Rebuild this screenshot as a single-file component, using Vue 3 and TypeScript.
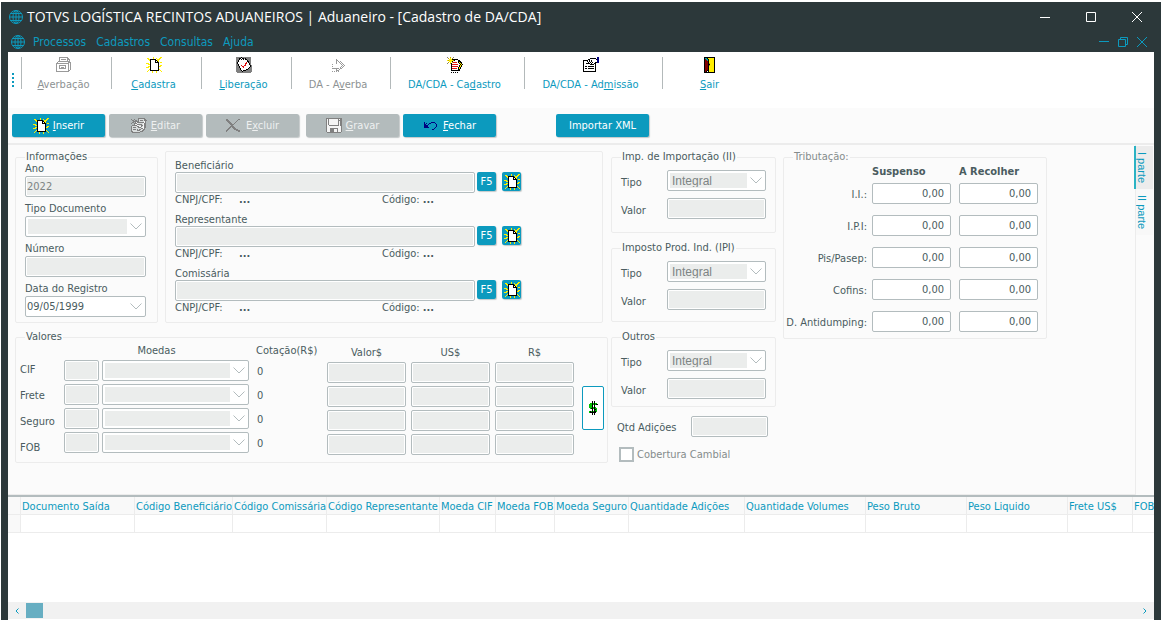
<script setup lang="ts">
import { ref } from 'vue'

interface Run { color: string; d: string }

const palette: Record<string, string> = {
  k: '#000000', w: '#ffffff', y: '#ffee00', g: '#9a9a9a', l: '#d8dcdc',
  d: '#808080', r: '#e01010', m: '#800000', b: '#000080', t: '#00a0a0',
  o: '#c0a000', e: '#00b000', s: '#f4f4f4',
}

const sprites: Record<string, string[]> = {
  newDoc: [
    '.......y......yy',
    '.yy....y..y..yy.',
    '..yykkkkkk.yyy..',
    '...ykwwwwkkyy...',
    '....kwwwwkwky...',
    '....kwwwwkkkk.yy',
    'yyy.kwwwwwwwk...',
    '..yykwwwwwwwk...',
    '....kwwwwwwwk.yy',
    '..yykwwwwwwwkyy.',
    'yyy.kwwwwwwwk...',
    '....kwwwwwwwk...',
    '...ykwwwwwwwky..',
    '..y.kkkkkkkkk.y.',
    '.y....y...y....y',
    '......y...y.....',
  ],
  drawer: [
    '...ggggggggg....',
    '...g.......gg...',
    '...g.ggggg.ggg..',
    '...g.......g.g..',
    '..gggggggggggg..',
    '.g..........ggg.',
    'ggggggggggggg.g.',
    'g...........g.g.',
    'g..ggggggg..g.g.',
    'g..g.....g..g.g.',
    'g..g.ggg.g..g.g.',
    'g..ggggggg..g.g.',
    'g...........g.g.',
    'g...........gg..',
    'ggggggggggggg...',
    '................',
  ],
  check: [
    'dddddkddddddddd.',
    'dddkkwkkdkddddd.',
    'dddkwkwkwkkdddd.',
    'ddkwwwwwwwwkddd.',
    'ddkwwwwwwwwkkdd.',
    'dkwwwwwwwwrwkdd.',
    'dkwwwwwwwrrwwkd.',
    'ddkwwwwwwrwwwkd.',
    'ddkwwrwwrrwwwwkd',
    'dddkwwrrwwwwwwkd',
    'dddkwwwrwwwwwkdd',
    'ddddkwwwwwwwkddd',
    'ddddkwwwwwkkdddd',
    'dddddkwkkkdddddd',
    'ddddddkddddddddd',
    '.dddddddddddddd.',
  ],
  forward: [
    '................',
    '................',
    '......g.........',
    '......gg........',
    '......g.g.g.....',
    '......g..g.g....',
    '......g...g.g...',
    '..g........g.g..',
    '............g.g.',
    '..g........g.g..',
    '..........g.g...',
    '..ggggggg.gg....',
    '......g..g......',
    '......ggg.......',
    '..g.g.g.g.......',
    '................',
  ],
  docPencil: [
    'd..o..d.........',
    '.o.y.o..........',
    '..yyykkkkkk.....',
    'yoyyyyokwwwkk...',
    '..yyykwwwwwkkk..',
    '.o.y.orrrrwkykk.',
    'd..okwwwwwwwkyk.',
    '....krrrrrrwwkyk',
    '....kwwwwwwwkyk.',
    '....krrrrrrwkyk.',
    '....kwwwwwwkyk..',
    '....krrrrrwkyk..',
    '....kwwwwwwkk...',
    '....kkkkkkkkk...',
    '................',
    '....k.k.k.k.....',
  ],
  handDoc: [
    '..............bb',
    '.......kkkkkk.bb',
    '.....kkwwwwwwkbb',
    'kkkkkwkwkwwwwwbb',
    'kwwwkwkwkwwwwwbb',
    'kwwwwkwkwkwwkkbb',
    'kwwkkkkwkwwkk...',
    'kwwwwwwkkkkwk...',
    'kwwwwwwwwwwwk...',
    'kwkkwkkkkkkwk...',
    'kwwwwwwwwwwwk...',
    'kwkkwkkkkkkwk...',
    'kwwwwwwwwwwwk...',
    'kwwwwwwwwwwwk...',
    'kkkkkkkkkkkkk...',
    '................',
  ],
  door: [
    '..kkkkkkkkkkk...',
    '..kttkyyyyyyk...',
    '..kmttkyyyyyk...',
    '..kmmtkyyyyyk...',
    '..kmmmkyyyyyk...',
    '..kmmmkyyyyyk...',
    '..kmmmkoyyyyk...',
    '..kmmmkkyyyyk...',
    '..kmmmkoyyyyk...',
    '..kmmmkyyyyyk...',
    '..kmmmkyyyyyk...',
    '..kmmmkyyyyyk...',
    '..kmmmkyyyyyk...',
    '..kmmkkyyyyyk...',
    '..kmk.kyyyyyk...',
    '..kkkkkkkkkkk...',
  ],
  edit: [
    '.......ddddddd..',
    'd..d...dllllldd.',
    '.dd.dd.dldddlddd',
    '..ddddddlllllsd.',
    '.dd.dsdddddddsd.',
    'd..dddslllllsdd.',
    '...dssdddddlsdd.',
    '.dddddssllddsdd.',
    'dlllllddssdlsdd.',
    'dldddlldddlssdd.',
    'dlllllllllddsd..',
    'dldddldlddlldd..',
    'dllllldddlldd...',
    'ddlllllllddd....',
    '.dddddddd.......',
    '................',
  ],
  cross: [
    '................',
    'dd..........dd..',
    'ddd........d....',
    '.ddd......d.....',
    '..ddd....d......',
    '...ddd..d.......',
    '....dddd........',
    '.....dd.........',
    '....dddd........',
    '...dd.ddd.......',
    '..dd...ddd......',
    '.dd.....dddd....',
    'dd........dddd..',
    'd...........dd..',
    '................',
    '................',
  ],
  disk: [
    'dddddddddddddddd',
    'dsdsssssssssdsdd',
    'dsdsssssssssdddd',
    'dsdsssssssssdsdd',
    'dsdsssssssssdsdd',
    'dsdsssssssssdsdd',
    'dsdsssssssssdsdd',
    'dssddddddddddsdd',
    'dssssssssssssssd',
    'dssssssssssssssd',
    'dsssddddddddsssd',
    'dsssddddsssdsssd',
    'dsssddddsssdsssd',
    'dsssddddsssdsssd',
    '.dddddddddddddd.',
    '................',
  ],
  undo: [
    '................',
    '................',
    '................',
    '................',
    '.b......bbbb....',
    '.b.b..bb....b...',
    '.bb..b.......b..',
    '.bbbb........b..',
    '.bbbb........b..',
    '.bbbbb......b...',
    '...........b....',
    '.........bb.....',
    '................',
    '................',
    '................',
    '................',
  ],
}

function runs(name: string): Run[] {
  const byColor: Record<string, string> = {}
  sprites[name].forEach((row, y) => {
    let x = 0
    while (x < row.length) {
      const c = row[x]
      let n = 1
      while (row[x + n] === c) n++
      if (c !== '.') byColor[c] = (byColor[c] ?? '') + `M${x} ${y}h${n}v1h-${n}z`
      x += n
    }
  })
  return Object.entries(byColor).map(([c, d]) => ({ color: palette[c], d }))
}

const menus = ['Processos', 'Cadastros', 'Consultas', 'Ajuda']

const tools = [
  { pre: '', key: 'A', post: 'verbação', icon: 'drawer', off: true, width: 90 },
  { pre: '', key: 'C', post: 'adastra', icon: 'newDoc', off: false, width: 90 },
  { pre: '', key: 'L', post: 'iberação', icon: 'check', off: false, width: 90 },
  { pre: 'DA - A', key: 'v', post: 'erba', icon: 'forward', off: true, width: 99 },
  { pre: 'DA/CDA - Ca', key: 'd', post: 'astro', icon: 'docPencil', off: false, width: 134 },
  { pre: 'DA/CDA - Ad', key: 'm', post: 'issão', icon: 'handDoc', off: false, width: 138 },
  { pre: '', key: 'S', post: 'air', icon: 'door', off: false, width: 100 },
]

const actionGroups = [
  [
    { pre: '', key: 'I', post: 'nserir', icon: 'newDoc', off: false },
    { pre: '', key: 'E', post: 'ditar', icon: 'edit', off: true },
    { pre: 'E', key: 'x', post: 'cluir', icon: 'cross', off: true },
  ],
  [
    { pre: '', key: 'G', post: 'ravar', icon: 'disk', off: true },
    { pre: '', key: 'F', post: 'echar', icon: 'undo', off: false },
  ],
]

const parties = ['Beneficiário', 'Representante', 'Comissária']
const taxes = ['Imp. de Importação (II)', 'Imposto Prod. Ind. (IPI)', 'Outros']
const currencies = ['CIF', 'Frete', 'Seguro', 'FOB']
const amounts = ['Valor$', 'US$', 'R$']
const tributes = ['I.I.:', 'I.P.I:', 'Pis/Pasep:', 'Cofins:', 'D. Antidumping:']

const columns = [
  { name: '', width: 13 },
  { name: 'Documento Saída', width: 114 },
  { name: 'Código Beneficiário', width: 98 },
  { name: 'Código Comissária', width: 94 },
  { name: 'Código Representante', width: 113 },
  { name: 'Moeda CIF', width: 56 },
  { name: 'Moeda FOB', width: 59 },
  { name: 'Moeda Seguro', width: 74 },
  { name: 'Quantidade Adições', width: 116 },
  { name: 'Quantidade Volumes', width: 121 },
  { name: 'Peso Bruto', width: 101 },
  { name: 'Peso Liquido', width: 101 },
  { name: 'Frete US$', width: 65 },
  { name: 'FOB US$', width: 65 },
]

const tab = ref(0)
const tabs = ['I parte', 'II parte']
const registryDate = ref('09/05/1999')
const exchangeCover = ref(false)
</script>

<template>
  <div class="window">
    <header class="head">
      <div class="titlebar">
        <svg class="globe" viewBox="0 0 16 16" aria-hidden="true">
          <circle cx="8" cy="8" r="6.5" /><ellipse cx="8" cy="8" rx="3" ry="6.5" />
          <path d="M8 1.5v13M1.5 8h13M2.5 4.5h11M2.5 11.5h11" />
        </svg>
        <h1>TOTVS LOGÍSTICA RECINTOS ADUANEIROS | Aduaneiro - [Cadastro de DA/CDA]</h1>
        <div class="winctl">
          <button type="button" aria-label="Minimizar"><svg viewBox="0 0 10 10"><path d="M0 5.5h10" /></svg></button>
          <button type="button" aria-label="Maximizar"><svg viewBox="0 0 10 10"><path d="M.5 .5h9v9h-9z" /></svg></button>
          <button type="button" aria-label="Fechar janela"><svg viewBox="0 0 10 10"><path d="M0 0l10 10M10 0L0 10" /></svg></button>
        </div>
      </div>
      <div class="menubar">
        <svg class="globe" viewBox="0 0 16 16" aria-hidden="true">
          <circle cx="8" cy="8" r="6.5" /><ellipse cx="8" cy="8" rx="3" ry="6.5" />
          <path d="M8 1.5v13M1.5 8h13M2.5 4.5h11M2.5 11.5h11" />
        </svg>
        <nav><button v-for="m in menus" :key="m" type="button">{{ m }}</button></nav>
        <div class="docctl">
          <button type="button" aria-label="Minimizar documento"><svg viewBox="0 0 10 10"><path d="M0 4.5h10" /></svg></button>
          <button type="button" aria-label="Restaurar documento"><svg viewBox="0 0 10 10"><path d="M.5 2.5h7v7h-7zM2.5 2.5v-2h7v7h-2" /></svg></button>
          <button type="button" aria-label="Fechar documento"><svg viewBox="0 0 10 10"><path d="M0 0l10 10M10 0L0 10" /></svg></button>
        </div>
      </div>
    </header>

    <div class="body">
      <div class="toolbar">
        <span class="grip"></span>
        <button
          v-for="t in tools" :key="t.icon" type="button" class="tool"
          :disabled="t.off" :style="{ width: t.width + 'px' }"
        >
          <svg class="sprite" viewBox="0 0 16 16" aria-hidden="true">
            <path v-for="r in runs(t.icon)" :key="r.color" :fill="r.color" :d="r.d" />
          </svg>
          <span>{{ t.pre }}<u>{{ t.key }}</u>{{ t.post }}</span>
        </button>
      </div>

      <div class="actions">
        <div v-for="(g, i) in actionGroups" :key="i" class="group">
          <button v-for="a in g" :key="a.icon" type="button" class="action" :disabled="a.off">
            <svg class="sprite" viewBox="0 0 16 16" aria-hidden="true">
              <path v-for="r in runs(a.icon)" :key="r.color" :fill="r.color" :d="r.d" />
            </svg>
            <span>{{ a.pre }}<u>{{ a.key }}</u>{{ a.post }}</span>
          </button>
        </div>
        <button type="button" class="action import">Importar XML</button>
      </div>

      <div class="sheet">
        <form class="form" @submit.prevent>
          <div class="left">
            <div class="upper">
              <fieldset class="info">
                <legend>Informações</legend>
                <div class="field"><label for="ano">Ano</label><input id="ano" class="box" value="2022" disabled /></div>
                <div class="field">
                  <label for="tipodoc">Tipo Documento</label>
                  <div class="combo">
                    <select id="tipodoc" disabled><option></option></select>
                    <svg viewBox="0 0 12 7"><path d="M.5 .5l5.5 5.5 5.5-5.5" /></svg>
                  </div>
                </div>
                <div class="field"><label for="numero">Número</label><input id="numero" class="box" disabled /></div>
                <div class="field">
                  <label for="data">Data do Registro</label>
                  <div class="combo">
                    <select id="data" v-model="registryDate" class="date"><option>09/05/1999</option></select>
                    <svg viewBox="0 0 12 7"><path d="M.5 .5l5.5 5.5 5.5-5.5" /></svg>
                  </div>
                </div>
              </fieldset>

              <div class="parties">
                <div v-for="p in parties" :key="p" class="party">
                  <label :for="p">{{ p }}</label>
                  <div class="partyline">
                    <input :id="p" class="box" disabled />
                    <button type="button" class="mini">F5</button>
                    <button type="button" class="mini" :aria-label="'Novo ' + p">
                      <svg class="sprite" viewBox="0 0 16 16">
                        <path v-for="r in runs('newDoc')" :key="r.color" :fill="r.color" :d="r.d" />
                      </svg>
                    </button>
                  </div>
                  <div class="ids"><span>CNPJ/CPF:</span><b>...</b><span>Código: <b>...</b></span></div>
                </div>
              </div>
            </div>

            <fieldset class="values">
              <legend>Valores</legend>
              <div class="names"><label v-for="c in currencies" :key="c" :for="'moeda' + c">{{ c }}</label></div>
              <div class="coins">
                <span class="coinhead">Moedas</span><span class="ratehead">Cotação(R$)</span>
                <template v-for="c in currencies" :key="c">
                  <input class="box" :aria-label="'Código moeda ' + c" disabled />
                  <div class="combo">
                    <select :id="'moeda' + c" disabled><option></option></select>
                    <svg viewBox="0 0 12 7"><path d="M.5 .5l5.5 5.5 5.5-5.5" /></svg>
                  </div>
                  <span class="rate">0</span>
                </template>
              </div>
              <div class="amounts">
                <span v-for="a in amounts" :key="a">{{ a }}</span>
                <template v-for="c in currencies" :key="c">
                  <input v-for="a in amounts" :key="a" class="box" :aria-label="c + ' ' + a" disabled />
                </template>
              </div>
              <button type="button" class="dollar" aria-label="Calcular">
                <svg viewBox="0 0 10 14">
                  <path class="glow" d="M8 4V3H3v1H2v2h1v1h4v1h1v2H7v1H2v-1" />
                  <path class="ink" d="M9 4V3H8M3 7h2M6 8h2M2 10v1h5v-1M4.5 0v14M6.5 0v14" />
                </svg>
              </button>
            </fieldset>
          </div>

          <div class="middle">
            <fieldset v-for="(t, i) in taxes" :key="t" class="tax">
              <legend>{{ t }}</legend>
              <div class="pair">
                <label :for="'tipo' + i">Tipo</label>
                <div class="combo">
                  <select :id="'tipo' + i" disabled><option>Integral</option></select>
                  <svg viewBox="0 0 12 7"><path d="M.5 .5l5.5 5.5 5.5-5.5" /></svg>
                </div>
              </div>
              <div class="pair"><label :for="'valor' + i">Valor</label><input :id="'valor' + i" class="box" disabled /></div>
            </fieldset>
            <div class="qty"><label for="qtd">Qtd Adições</label><input id="qtd" class="box" disabled /></div>
            <label class="cover"><input v-model="exchangeCover" type="checkbox" disabled /><span>Cobertura Cambial</span></label>
          </div>

          <fieldset class="tribute">
            <legend>Tributação:</legend>
            <div class="tribgrid">
              <span></span><strong>Suspenso</strong><strong>A Recolher</strong>
              <template v-for="(t, i) in tributes" :key="t">
                <label :for="'susp' + i">{{ t }}</label>
                <input :id="'susp' + i" class="box" value="0,00" />
                <input class="box" value="0,00" :aria-label="t + ' A Recolher'" />
              </template>
            </div>
          </fieldset>
        </form>
        <div class="tabs" role="tablist">
          <button
            v-for="(t, i) in tabs" :key="t" type="button" role="tab"
            :aria-selected="tab === i" :class="{ on: tab === i }" @click="tab = i"
          >{{ t }}</button>
        </div>
      </div>

      <div class="grid">
        <table>
          <colgroup><col v-for="c in columns" :key="c.name" :style="{ width: c.width + 'px' }" /></colgroup>
          <thead><tr><th v-for="c in columns" :key="c.name">{{ c.name }}</th></tr></thead>
          <tbody><tr><td v-for="c in columns" :key="c.name"></td></tr></tbody>
        </table>
      </div>
      <div class="scroll">
        <button type="button" aria-label="Rolar para a esquerda"><svg viewBox="0 0 4 6"><path d="M3.5 .5L1 3l2.5 2.5" /></svg></button>
        <span class="thumb"></span>
        <button type="button" aria-label="Rolar para a direita"><svg viewBox="0 0 4 6"><path d="M.5 .5L3 3 .5 5.5" /></svg></button>
      </div>
    </div>
  </div>
</template>

<style>
html, body { background: #fff; }
</style>

<style scoped>
.window, .window * { box-sizing: border-box; }
.window {
  --teal: #0c9abe;
  --ink: #4a5c60;
  --line: #b3bcbe;
  --soft: #ececec;
  --grey: #ebedec;
  min-height: 100vh;
  display: flex;
  flex-direction: column;
  border-top: 2px solid #fff;
  border-left: 1px solid #fff;
  background: #2c383a;
  color: var(--ink);
  font: 11px/12px "DejaVu Sans Condensed", Tahoma, sans-serif;
  overflow: hidden;
}
button, input, select { font: inherit; color: inherit; margin: 0; }
button { border: 0; padding: 0; background: none; white-space: nowrap; }
svg { display: block; }

.head { padding-right: 1px; color: var(--teal); }
.titlebar { display: flex; align-items: center; height: 30px; padding-left: 7px; }
.globe { width: 16px; height: 16px; fill: none; stroke: var(--teal); stroke-width: 1; flex: none; }
h1 { margin: 0 0 0 3px; flex: 1; color: #fff; font: 400 14px/18px "Open Sans", sans-serif; white-space: nowrap; }
.winctl { display: flex; }
.winctl button { width: 46px; height: 30px; display: grid; place-items: center; }
.winctl svg, .docctl svg { width: 10px; height: 10px; fill: none; stroke: #fff; }
.menubar { display: flex; align-items: center; height: 20px; padding: 0 13px 0 9px; }
.menubar nav { display: flex; flex: 1; gap: 10px; margin-left: 7px; font-size: 12px; }
.docctl { display: flex; gap: 9px; }
.docctl svg { stroke: var(--teal); }

.body { flex: 1; display: flex; flex-direction: column; margin: 0 7px; background: #fff; min-width: 0; }
.toolbar { display: flex; align-items: flex-start; height: 56px; padding: 5px 0 0 4px; }
.grip { width: 2px; height: 15px; margin: 16px 7px 0 0; background: repeating-linear-gradient(var(--teal) 0 2px, transparent 2px 4px); }
.tool {
  display: flex; flex-direction: column; align-items: center; gap: 5px; height: 32px;
  padding-right: 6px; border-left: 1px solid #b3b9ba; color: var(--teal); line-height: 14px;
}
.tool:disabled { color: #8d9293; }
.sprite { width: 16px; height: 16px; flex: none; shape-rendering: crispEdges; }

.actions { display: flex; align-items: center; height: 37px; padding-left: 4px; background: #fbfbfb; border-bottom: 2px solid var(--soft); }
.group { display: flex; gap: 4px; margin-right: 7px; }
.action {
  display: flex; align-items: center; justify-content: center; gap: 4px; width: 93px; height: 23px;
  border-radius: 2px; background: var(--teal); color: #fff; box-shadow: 1px 1px 1px #c4c8c9; line-height: 14px;
}
.action:disabled { background: #b3bbbc; color: #eef0f0; }
.import { margin-left: 53px; }

.sheet { display: flex; background: #fbfbfb; }
.form { display: flex; flex: 1; align-items: flex-start; min-height: 350px; padding: 6px 0 0 7px; border-right: 1px solid var(--soft); border-bottom: 1px solid var(--soft); }
fieldset { min-width: 0; margin: 0; padding: 0; border: 1px solid var(--soft); border-radius: 2px; }
legend { padding: 0 1px; line-height: 12px; }
.left { width: 593px; display: grid; gap: 8px; }
.upper { display: flex; gap: 7px; height: 172px; }

.info { width: 143px; padding: 0 11px 0 9px; }
.field { display: grid; gap: 1px; margin-bottom: 6px; }
.box {
  width: 100%; min-width: 0; height: 21px; padding: 1px; border: 1px solid var(--line); border-radius: 2px;
  background: #fff; outline: 0;
}
.box:disabled { background: linear-gradient(var(--grey), var(--grey)) content-box, #fff; color: #7d8484; }
.combo { position: relative; min-width: 0; }
.combo select {
  appearance: none; display: block; width: 100%; height: 21px; padding: 2px 18px 2px 2px; border: 1px solid var(--line);
  border-radius: 2px; background: #fff; opacity: 1; outline: 0;
}
.combo select:disabled { background: linear-gradient(var(--grey), var(--grey)) content-box, #fff; color: #7d8484; font-size: 12px; font-family: "Liberation Sans", Arial, sans-serif; text-indent: 2px; }
.combo svg { position: absolute; right: 4px; top: 7px; width: 12px; height: 7px; fill: none; stroke: var(--line); pointer-events: none; }
.combo .date { padding-left: 1px; }

.parties { width: 438px; padding: 7px 0 0 9px; border: 1px solid var(--soft); border-radius: 2px; }
.party { display: grid; height: 54px; align-content: start; line-height: 14px; }
.party label { line-height: 13px; }
.partyline { display: flex; }
.partyline .box { width: 300px; }
.mini { display: grid; place-items: center; width: 19px; height: 19px; margin-left: 2px; border-radius: 2px; background: var(--teal); color: #fff; box-shadow: 1px 1px 1px #c4c8c9; }
.mini + .mini { margin-left: 6px; }
.ids { display: grid; grid-template-columns: 64px 143px auto; }

.values { display: flex; height: 132px; padding-left: 4px; }
.values legend { margin-left: 5px; }
.names { display: grid; width: 44px; gap: 14px; padding-top: 21px; align-content: start; }
.coins { display: grid; grid-template-columns: 35px 147px 70px; gap: 3px; align-content: start; width: 263px; }
.coinhead, .ratehead, .amounts span { height: 14px; padding-top: 2px; }
.coinhead { grid-column: 1 / 3; text-align: center; }
.ratehead { padding-left: 4px; }
.rate { padding: 6px 0 0 5px; }
.amounts { display: grid; grid-template-columns: repeat(3, 79px); gap: 3px 5px; align-content: start; padding-top: 2px; }
.amounts span { text-align: center; }
.dollar { width: 22px; height: 44px; margin: 43px 0 0 8px; border: 1px solid var(--teal); border-radius: 2px; background: #fff; display: grid; place-items: center; }
.dollar svg { width: 10px; height: 14px; fill: none; shape-rendering: crispEdges; }
.glow { stroke: #00c000; stroke-width: 2; }
.ink { stroke: #000; }

.middle { display: grid; grid-template-rows: 82px 80px 76px 21px 16px; gap: 9px; width: 165px; margin-left: 3px; }
.tax { padding: 7px 9px 0; }
.pair { display: grid; grid-template-columns: 46px 1fr; align-items: center; margin-bottom: 7px; }
.pair label { padding-top: 5px; }
.qty { display: grid; grid-template-columns: 1fr 77px; align-items: center; padding: 0 8px 0 6px; }
.qty label, .cover span { padding-top: 2px; }
.cover { display: flex; align-items: center; gap: 3px; padding-left: 8px; color: #858c8c; }
.cover input { appearance: none; width: 15px; height: 15px; border: 2px solid var(--line); background: #fff; }

.tribute { width: 264px; height: 188px; margin-left: 7px; padding: 0 8px 0 0; }
.tribute legend { margin-left: 9px; color: #858c8c; }
.tribgrid { display: grid; grid-template-columns: minmax(0, 1fr) 79px 79px; column-gap: 8px; row-gap: 11px; align-items: center; }
.tribgrid strong { height: 9px; line-height: 18px; }
.tribgrid label { justify-self: end; white-space: nowrap; margin-right: -3px; padding-top: 3px; }
.tribgrid .box { text-align: right; padding-right: 6px; }

.tabs { width: 18px; display: flex; flex-direction: column; align-items: flex-start; padding-top: 1px; }
.tabs button { writing-mode: vertical-rl; width: 17px; padding: 6px 5px 6px 0; color: var(--teal); font-family: "Liberation Sans", Arial, sans-serif; background: #f8f8f8; }
.tabs .on { background: var(--soft); box-shadow: -2px 0 0 #2bb3c4; }

.grid { flex: 1; min-height: 107px; border-top: 2px solid var(--line); overflow: hidden; }
table { border-collapse: separate; border-spacing: 0; table-layout: fixed; width: 1190px; }
th, td { height: 18px; padding: 2px 0 0 1px; border-right: 1px solid var(--soft); border-bottom: 1px solid var(--soft); text-align: left; white-space: nowrap; overflow: hidden; }
th { color: var(--teal); font-weight: 400; background: #f9f9f9; }
td:first-child { background: #f9f9f9; }
.scroll { display: flex; align-items: center; height: 17px; margin-bottom: 1px; background: #f1f1f1; }
.scroll button { width: 18px; height: 17px; display: grid; place-items: center; }
.scroll button:last-child { margin-left: auto; }
.scroll svg { width: 4px; height: 6px; fill: none; stroke: var(--teal); }
.thumb { width: 17px; height: 15px; background: #67aec2; }
</style>
